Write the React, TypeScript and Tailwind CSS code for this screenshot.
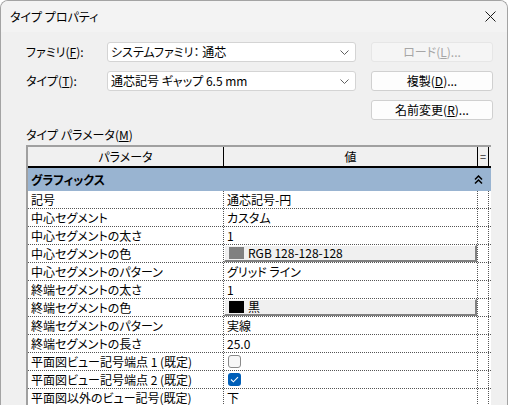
import React from "react";

const font = "font-['Noto_Sans_CJK_JP','Noto_Sans',sans-serif] [font-feature-settings:'palt']";

type Row = {
  name: string;
  value?: string;
  swatch?: string;
  check?: boolean;
};

const rows: Row[] = [
  { name: "記号", value: "通芯記号-円" },
  { name: "中心セグメント", value: "カスタム" },
  { name: "中心セグメントの太さ", value: "1" },
  { name: "中心セグメントの色", value: "RGB 128-128-128", swatch: "#808080" },
  { name: "中心セグメントのパターン", value: "グリッド ライン" },
  { name: "終端セグメントの太さ", value: "1" },
  { name: "終端セグメントの色", value: "黒", swatch: "#000000" },
  { name: "終端セグメントのパターン", value: "実線" },
  { name: "終端セグメントの長さ", value: "25.0" },
  { name: "平面図ビュー記号端点 1 (既定)", check: false },
  { name: "平面図ビュー記号端点 2 (既定)", check: true },
  { name: "平面図以外のビュー記号(既定)", value: "下" },
];

function Chevron() {
  return (
    <svg width="9" height="5" viewBox="0 0 9 5" className="text-[#606060]">
      <path d="M0.5 0.5 L4.5 4.5 L8.5 0.5" fill="none" stroke="currentColor" strokeWidth="1" />
    </svg>
  );
}

function Combo({ text }: { text: string }) {
  return (
    <div className="flex h-[20px] w-[249px] items-center justify-between rounded-[3px] border border-[#d4d4d4] bg-white pl-[3px] pr-[6px]">
      <span className="text-[12px] leading-none text-black">{text}</span>
      <Chevron />
    </div>
  );
}

function Btn({ children, disabled }: { children: React.ReactNode; disabled?: boolean }) {
  return (
    <div
      className={
        disabled
          ? "flex h-[20px] w-[122px] items-center justify-center rounded-[3px] border border-[#e6e6e6] bg-[#f5f5f5] text-[12px] leading-none text-[#a6a6a6]"
          : "flex h-[20px] w-[122px] items-center justify-center rounded-[3px] border border-[#d0d0d0] bg-[#fdfdfd] text-[12px] leading-none text-black"
      }
    >
      {children}
    </div>
  );
}

function Cell({ row }: { row: Row }) {
  if (row.swatch) {
    return (
      <div className="flex h-full w-full items-center gap-[4px] border-t border-l border-t-white border-l-white border-r-2 border-b-2 border-r-[#808080] border-b-[#808080] bg-[#f0f0f0] pl-[4px]">
        <div className="h-[12px] w-[15px]" style={{ backgroundColor: row.swatch }} />
        <span>{row.value}</span>
      </div>
    );
  }
  if (row.check !== undefined) {
    return (
      <div className="flex h-full items-center pl-[4px]">
        {row.check ? (
          <div className="flex h-[13px] w-[13px] items-center justify-center rounded-[3px] bg-[#005fb8]">
            <svg width="9" height="7" viewBox="0 0 9 7">
              <path d="M1 3.5 L3.4 5.8 L8 1.2" fill="none" stroke="white" strokeWidth="1.1" />
            </svg>
          </div>
        ) : (
          <div className="h-[13px] w-[13px] rounded-[3px] border border-[#8a8a8a] bg-[#f7f7f7]" />
        )}
      </div>
    );
  }
  return <div className="flex h-full items-center pl-[3px]">{row.value}</div>;
}

export default function App() {
  return (
    <div className={`h-[405px] w-[508px] overflow-hidden bg-white ${font}`}>
      <div className="flex h-[405px] w-[508px] flex-col overflow-hidden rounded-t-[8px] border border-b-0 border-[#a3a3a3] bg-[#f0f0f0] text-black">
        <div className="flex h-[31px] shrink-0 items-center justify-between bg-[#f3f3f3] pl-[9px] pr-[11px]">
          <span className="text-[12px] leading-none">タイプ プロパティ</span>
          <svg width="11" height="11" viewBox="0 0 11 11">
            <path d="M0.5 0.5 L10.5 10.5 M10.5 0.5 L0.5 10.5" stroke="#1a1a1a" strokeWidth="1" />
          </svg>
        </div>

        <div className="flex flex-col pl-[25px] pt-[10px]">
          <div className="flex items-center">
            <span className="w-[81px] text-[12px] leading-none">
              ファミリ(<span className="underline">F</span>):
            </span>
            <Combo text="システムファミリ： 通芯" />
            <div className="ml-[15px]">
              <Btn disabled>
                ロード(<span className="underline">L</span>)...
              </Btn>
            </div>
          </div>
          <div className="mt-[9px] flex items-center">
            <span className="w-[81px] text-[12px] leading-none">
              タイプ(<span className="underline">T</span>):
            </span>
            <Combo text="通芯記号 ギャップ 6.5 mm" />
            <div className="ml-[15px]">
              <Btn>
                複製(<span className="underline">D</span>)...
              </Btn>
            </div>
          </div>
          <div className="mt-[9px] flex pl-[345px]">
            <Btn>
              名前変更(<span className="underline">R</span>)...
            </Btn>
          </div>

          <div className="mt-[5px] h-[20px] text-[12px] leading-[20px]">
            タイプ パラメータ(<span className="underline">M</span>)
          </div>

          <div className="w-[465px] border-t-2 border-l-2 border-[#a0a0a0] bg-white text-[12px]">
            <div className="flex h-[21px] border-b-2 border-black bg-[#f0f0f0]">
              <div className="flex w-[196px] items-center justify-center border-r border-black">パラメータ</div>
              <div className="flex w-[253px] items-center justify-center">値</div>
              <div className="flex w-[12px] items-center justify-center border-x border-black text-[11px] text-[#333]">=</div>
            </div>
            <div className="flex h-[23px] items-center justify-between bg-[#99b4d1] pl-[3px] pr-[8px]">
              <span className="font-bold">グラフィックス</span>
              <svg width="9" height="10" viewBox="0 0 9 10">
                <path d="M1 4.5 L4.5 1 L8 4.5 M1 8.5 L4.5 5 L8 8.5" fill="none" stroke="#000" strokeWidth="1.5" />
              </svg>
            </div>
            {rows.map((row) => (
              <div key={row.name} className="flex h-[18px] border-b border-dotted border-[#555]">
                <div className="flex w-[196px] items-center border-r border-dotted border-[#555] pl-[3px] leading-none">
                  {row.name}
                </div>
                <div className="w-[253px] leading-none">
                  <Cell row={row} />
                </div>
                <div className="w-[12px] border-x border-dotted border-[#555]" />
              </div>
            ))}
          </div>
        </div>
      </div>
    </div>
  );
}
